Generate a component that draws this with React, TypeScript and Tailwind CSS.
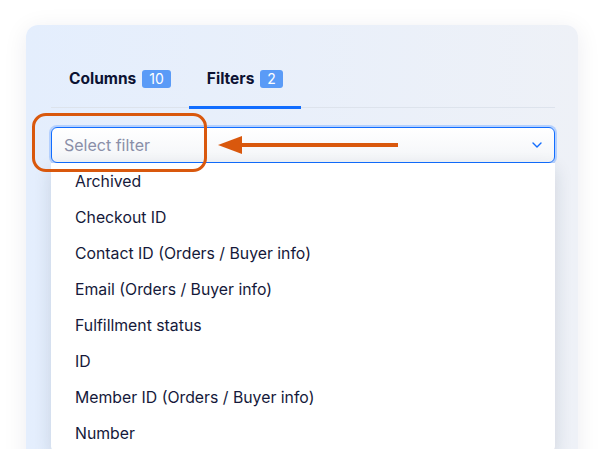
import { useState } from "react";

const filterOptions = [
  "Archived",
  "Checkout ID",
  "Contact ID (Orders / Buyer info)",
  "Email (Orders / Buyer info)",
  "Fulfillment status",
  "ID",
  "Member ID (Orders / Buyer info)",
  "Number",
];

type Tab = { key: string; label: string; count: number };

const tabs: Tab[] = [
  { key: "columns", label: "Columns", count: 10 },
  { key: "filters", label: "Filters", count: 2 },
];

function Chevron() {
  return (
    <svg width="10" height="6" viewBox="0 0 10 6" fill="none" className="shrink-0">
      <path d="M1 1l4 4 4-4" stroke="#116dff" strokeWidth="1.4" strokeLinecap="round" strokeLinejoin="round" />
    </svg>
  );
}

// Callout arrow pointing back at the select box.
function CalloutArrow() {
  return (
    <svg width="180" height="20" viewBox="0 0 180 20" fill="none">
      <path d="M20 8h160v4H20z" fill="#d9580d" />
      <path d="M0 10L24 1v18z" fill="#d9580d" />
    </svg>
  );
}

export default function App() {
  const [active, setActive] = useState("filters");

  return (
    <div
      className="h-[449px] overflow-hidden bg-white pl-[26px] pr-[30px] pt-[25px]"
      style={{ fontFamily: "Inter, 'Noto Sans', sans-serif" }}
    >
      <div className="relative h-[460px] rounded-[12px] bg-gradient-to-r from-[#e4eefd] to-[#eef1f7] pl-[25px] pr-[23px] pt-[44px] shadow-[0_4px_24px_rgba(20,30,60,0.08)]">
        {/* Tabs */}
        <div className="flex border-b border-[#dde3ec]">
          {tabs.map((t) => {
            const on = t.key === active;
            return (
              <button
                key={t.key}
                onClick={() => setActive(t.key)}
                className={`-mb-[2px] flex items-center gap-[6px] border-b-[3px] px-[18px] pb-[17px] ${
                  on ? "border-[#116dff]" : "border-transparent"
                }`}
              >
                <span className="text-[15.5px] leading-5 font-bold text-[#0c1233]">{t.label}</span>
                <span className="h-[18px] rounded-[3px] bg-[#5a9bf7] px-[7px] text-[14px] leading-[18px] text-white">
                  {t.count}
                </span>
              </button>
            );
          })}
        </div>

        {/* Select */}
        <div className="mt-[19px] flex h-9 items-center justify-between rounded-[6px] border border-[#116dff] bg-gradient-to-b from-white to-[#f3f5f8] pl-[12px] pr-[12px] shadow-[0_0_0_2px_#b4d0fe]">
          <span className="text-[16px] text-[#8a8fa8]">Select filter</span>
          <Chevron />
        </div>

        {/* Options */}
        <div className="rounded-b-[6px] bg-white pt-px shadow-[0_6px_18px_rgba(22,45,61,0.14)]">
          {filterOptions.map((o) => (
            <div key={o} className="flex h-9 items-center pl-[24px] text-[15.8px] text-[#15193a]">
              {o}
            </div>
          ))}
        </div>

        {/* Highlight around the select */}
        <div className="absolute left-[6px] top-[88px] h-[59px] w-[175px] rounded-[14px] border-[3px] border-[#d9580d]" />
        <div className="absolute left-[192px] top-[110px]">
          <CalloutArrow />
        </div>
      </div>
    </div>
  );
}
